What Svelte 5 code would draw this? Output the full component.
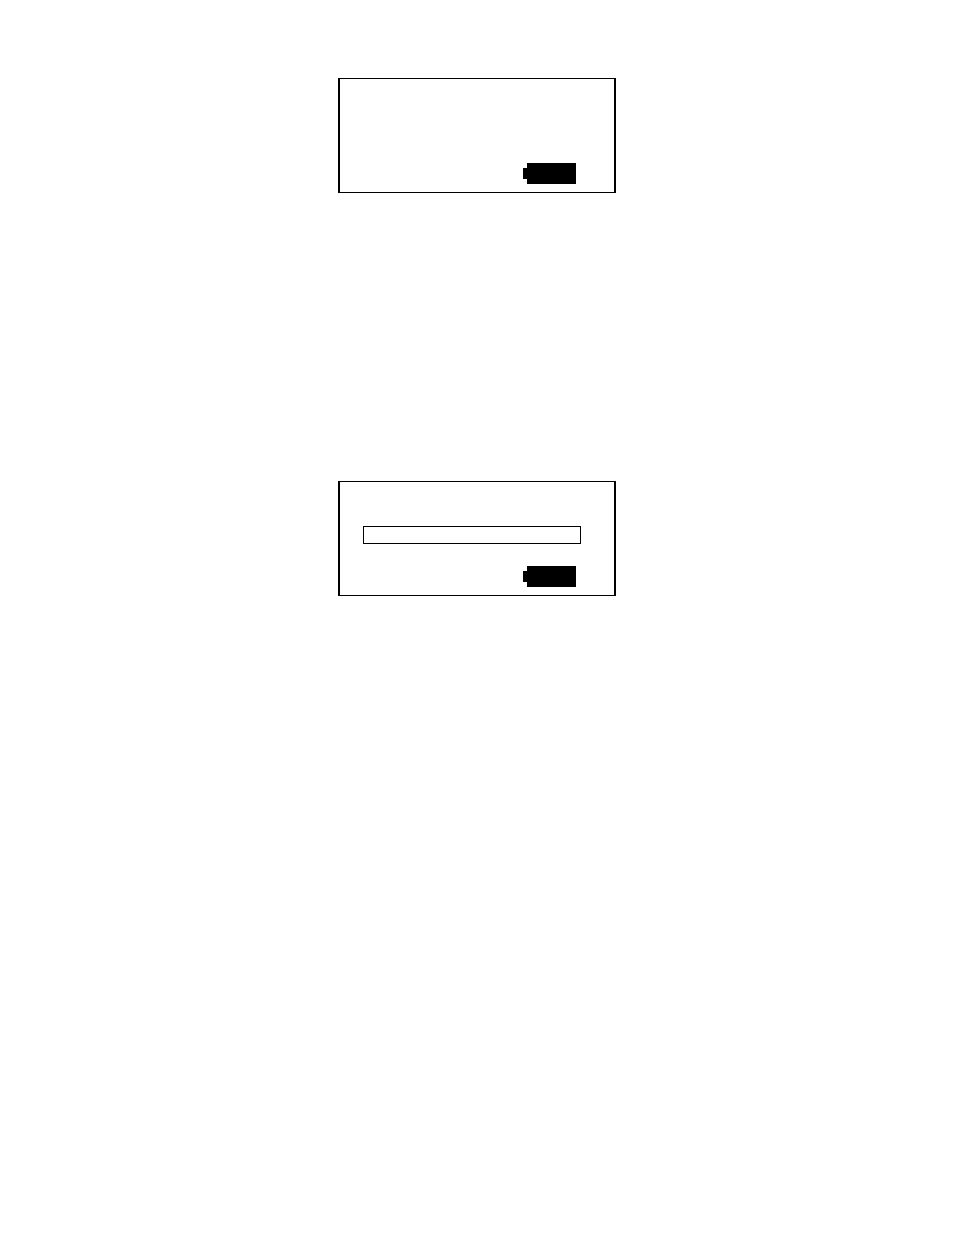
<script>
  // LCD screens, top to bottom; progress is null where no bar is shown
  const screens = [
    { id: 'idle', progress: null },
    { id: 'busy', progress: 0 },
  ];
</script>

<main class="page">
  {#each screens as screen (screen.id)}
    <section class="screen">
      {#if screen.progress !== null}
        <progress class="bar" max="100" value={screen.progress} aria-label="Progress"></progress>
      {/if}
      <svg class="battery" viewBox="0 0 53 21" shape-rendering="crispEdges" role="img" aria-label="Battery full">
        <path d="M4 0h49v21H4v-5H0V5h4z" />
      </svg>
    </section>
  {/each}
</main>

<style>
  :global(body) {
    margin: 0;
    background: #fff;
  }

  .page {
    display: flex;
    flex-direction: column;
    align-items: center;
    gap: 288px;
    padding: 78px 16px;
  }

  .screen {
    display: flex;
    flex-direction: column;
    box-sizing: border-box;
    width: 100%;
    max-width: 278px;
    min-height: 115px;
    padding: 44px 33px 8px 23px;
    border: solid #000;
    border-width: 1px 2px;
  }

  .bar {
    appearance: none;
    display: block;
    box-sizing: border-box;
    width: 100%;
    height: 18px;
    border: 1px solid #000;
    background: #fff;
  }

  .bar::-webkit-progress-bar {
    background: #fff;
  }

  .bar::-webkit-progress-value {
    background: #000;
  }

  .battery {
    display: block;
    width: 53px;
    height: 21px;
    margin-top: auto;
    margin-right: 5px;
    align-self: flex-end;
    fill: #000;
  }
</style>
